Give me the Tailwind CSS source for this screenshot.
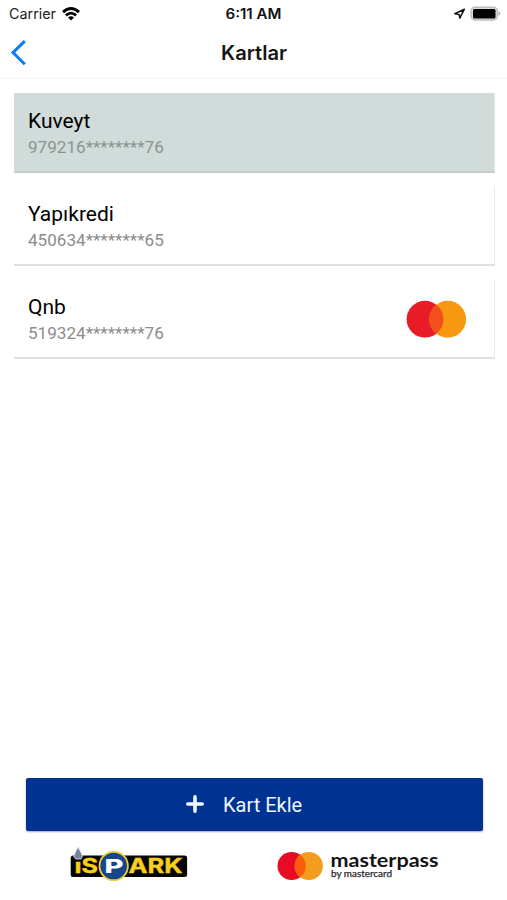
<!DOCTYPE html>
<html lang="tr">
<head>
<meta charset="utf-8">
<title>Kartlar</title>
<script src="https://cdn.jsdelivr.net/npm/@tailwindcss/browser@4"></script>
</head>
<body class="bg-white">
<div class="flex h-[900px] w-[507px] flex-col overflow-hidden bg-white font-[Roboto,sans-serif] text-[#111]">
  <header class="h-[79px] shrink-0 border-b border-[#f3f3f3]">
    <div class="grid h-7 grid-cols-3 items-center pl-[9px] pr-[9px] font-[Inter,sans-serif] text-[14px] leading-7">
      <div class="flex items-center gap-[6px] text-[#222]">
        <svg class="h-7 w-[47px]" viewBox="0 0 47 28"><text x="0" y="19" font-size="14.3" fill="#222" textLength="47" lengthAdjust="spacingAndGlyphs">Carrier</text></svg>
        <svg class="h-[14px] w-[18px]" viewBox="0 0 18 14" fill="none" stroke="#000" stroke-width="2.8"><path d="M1 5.1Q9-2.1 17 5.1M3.9 8.4Q9 3.9 14.1 8.4"/><path d="M6 10.5Q9 8 12 10.5L9 13.5Z" fill="#000" stroke="none"/></svg>
      </div>
      <div class="flex justify-center"><svg class="h-7 w-[57px]" viewBox="0 0 57 28"><text x="0.5" y="19" font-size="14" font-weight="600" fill="#111" textLength="56" lengthAdjust="spacingAndGlyphs">6:11 AM</text></svg></div>
      <div class="-mr-[3px] flex items-center justify-end gap-[4px]">
        <svg class="h-[14px] w-[13px]" viewBox="0 0 13 14" fill="none" stroke="#111" stroke-width="1.5" stroke-linejoin="round"><path d="M1.8 6.8L11.4 2.2L6.8 11.2L6.1 7.4Z"/></svg>
        <svg class="h-[16px] w-[31px]" viewBox="0 0 31 16"><rect x="1" y="1.2" width="26.5" height="12.8" rx="4" fill="#ddd" stroke="#bdbdbd" stroke-width="1.4"/><rect x="3" y="3" width="22.5" height="9.4" rx="1.5" fill="#000"/><path d="M28.6 5Q31.8 7.6 28.6 10Z" fill="#aaa"/></svg>
      </div>
    </div>
    <div class="grid h-[50px] grid-cols-3 items-center">
      <svg class="ml-[10px] h-[28px] w-[18px]" viewBox="0 0 18 28" fill="none" stroke="#087df6" stroke-width="3"><path d="M14.8 2.2L3 13.6L14.8 25.3"/></svg>
      <h1 class="flex justify-center"><svg class="h-[30px] w-[66px]" viewBox="0 0 66 30"><text x="0" y="21.5" font-family="Inter" font-size="20" font-weight="600" fill="#161616" textLength="66" lengthAdjust="spacingAndGlyphs">Kartlar</text></svg></h1>
    </div>
  </header>

  <main class="flex flex-1 flex-col gap-[13px] pl-[14px] pr-[12px] pt-[14px]">
    <section class="flex h-[80px] flex-col border-r border-b-2 border-r-[#dfe6e4] border-b-[#c5cecc] bg-[#d1dcda] pl-[14px] pt-[15px]">
      <h2 class="text-[21px] leading-[27px] text-black">Kuveyt</h2>
      <p class="text-[17.1px] leading-[24px] text-[#8b9391]">979216********76</p>
    </section>
    <section class="flex h-[80px] flex-col border-r border-b-2 border-r-[#ececec] border-b-[#e0e0e0] bg-white pl-[14px] pt-[15px]">
      <h2 class="text-[21px] leading-[27px] text-black">Yapıkredi</h2>
      <p class="text-[17.1px] leading-[24px] text-[#8c8c8c]">450634********65</p>
    </section>
    <section class="flex h-[80px] justify-between border-r border-b-2 border-r-[#ececec] border-b-[#e0e0e0] bg-white pl-[14px] pr-[27px]">
      <div class="flex flex-col pt-[15px]">
        <h2 class="text-[21px] leading-[27px] text-black">Qnb</h2>
        <p class="text-[17.1px] leading-[24px] text-[#8c8c8c]">519324********76</p>
      </div>
      <svg class="mt-[21px] h-[38px] w-[61px]" viewBox="0 0 61 38"><circle cx="19" cy="19.2" r="18.4" fill="#e71c27"/><circle cx="41.7" cy="19.2" r="18.4" fill="#f8980f"/><path d="M30.35 4.7A18.4 18.4 0 0 1 30.35 33.7A18.4 18.4 0 0 1 30.35 4.7Z" fill="#f2501b"/></svg>
    </section>
  </main>

  <footer class="h-[122px] shrink-0 pl-[26px] pr-[24px]">
    <button class="flex h-[53px] w-full items-center rounded-[2px] bg-[#003391] pl-[159.5px] text-[#eef5ff] shadow-[0_1px_2px_rgba(0,0,0,0.35)]">
      <svg class="-mt-px h-[18px] w-[18px]" viewBox="0 0 18 18" fill="none" stroke="#f2f7ff" stroke-width="3.6" stroke-linecap="round"><path d="M9 1.8V16.2M1.8 9H16.2"/></svg>
      <span class="ml-[19.5px] text-[20px] leading-[28px]">Kart Ekle</span>
    </button>
    <div class="flex pl-[44px] pt-[13px]">
      <svg class="h-[40px] w-[118px]" viewBox="0 0 118 40" role="img" aria-label="İSPARK">
        <rect x="0.7" y="11.5" width="116.4" height="21.5" rx="2.5" fill="#050505"/>
        <path d="M8 3Q5 8 3.7 13L6 15H11L12.5 12Q11 8 8 3Z" fill="#7685a5" stroke="#e5e8ee" stroke-width=".8"/>
        <g font-family="Inter" font-weight="700" font-size="20" fill="#f8cf1c" stroke="#f8cf1c" stroke-width=".4">
          <text x="4.5" y="29" textLength="7" lengthAdjust="spacingAndGlyphs">ı</text>
          <text x="11.5" y="29" textLength="16.5" lengthAdjust="spacingAndGlyphs">S</text>
          <text x="58.5" y="29" textLength="54" lengthAdjust="spacingAndGlyphs">ARK</text>
        </g>
        <circle cx="43.7" cy="22" r="14.2" fill="#17468b" stroke="#f2cf38" stroke-width="1.8"/>
        <text x="34.5" y="28.8" font-family="Inter" font-weight="800" font-size="19" fill="#fff" textLength="19" lengthAdjust="spacingAndGlyphs">P</text>
      </svg>
      <svg class="ml-[89px] h-[40px] w-[164px]" viewBox="0 0 164 40">
        <circle cx="14.6" cy="22" r="14.1" fill="#e90b23"/><circle cx="31.8" cy="22" r="14.1" fill="#f29d20"/><path d="M23.2 10.8A14.1 14.1 0 0 1 23.2 33.2A14.1 14.1 0 0 1 23.2 10.8Z" fill="#fa5c09"/>
        <text x="53.5" y="23" font-family="Lato" font-weight="700" font-size="18.4" fill="#141414" textLength="108" lengthAdjust="spacingAndGlyphs">masterpass</text>
        <text x="54" y="32.8" font-family="Lato" font-weight="400" stroke="#292929" stroke-width=".25" font-size="9.4" fill="#292929" textLength="61" lengthAdjust="spacingAndGlyphs">by mastercard</text>
      </svg>
    </div>
  </footer>
</div>
</body>
</html>
